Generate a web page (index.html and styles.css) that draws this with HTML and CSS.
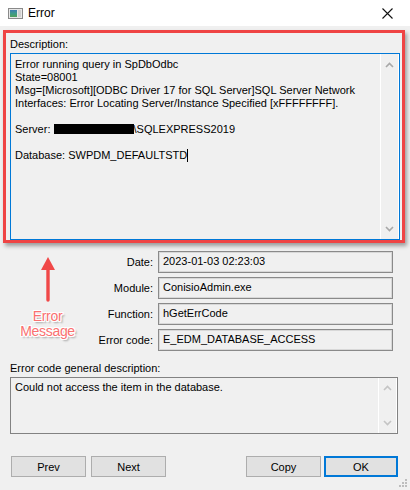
FILE: index.html
```html
<!DOCTYPE html>
<html lang="en">
<head>
    <meta charset="UTF-8">
    <meta name="viewport" content="width=device-width, initial-scale=1.0">
    <title>Error</title>
    <link rel="stylesheet" href="styles.css">
</head>
<body>
    <div class="window">
        <div class="titlebar">
            <svg class="app-icon" width="15" height="11" viewBox="0 0 15 11">
                <defs>
                    <linearGradient id="pane" x1="0" y1="0" x2="0" y2="1">
                        <stop offset="0" stop-color="#3d7bb0"/>
                        <stop offset="0.5" stop-color="#3e9a8a"/>
                        <stop offset="1" stop-color="#4fa05a"/>
                    </linearGradient>
                </defs>
                <rect x="0.5" y="0.5" width="14" height="10" fill="#e8e8e8" stroke="#8a8a8a"/>
                <rect x="2" y="2" width="7" height="7" fill="url(#pane)"/>
                <rect x="10" y="2" width="3" height="7" fill="#d0d0d0"/>
            </svg>
            <span class="title">Error</span>
            <svg class="close" width="11" height="11" viewBox="0 0 11 11">
                <path d="M0.5 0.5 L10.5 10.5 M10.5 0.5 L0.5 10.5" stroke="#111" stroke-width="1.1" fill="none"/>
            </svg>
        </div>

        <div class="content">
            <div class="highlight">
                <div class="label">Description:</div>
                <div class="textbox description">
                    <div class="text">
                        <div>Error running query in SpDbOdbc</div>
                        <div>State=08001</div>
                        <div>Msg=[Microsoft][ODBC Driver 17 for SQL Server]SQL Server Network</div>
                        <div>Interfaces: Error Locating Server/Instance Specified [xFFFFFFFF].</div>
                        <div>&nbsp;</div>
                        <div>Server: <span class="redacted"></span>\SQLEXPRESS2019</div>
                        <div>&nbsp;</div>
                        <div>Database: SWPDM_DEFAULTSTD<span class="caret"></span></div>
                    </div>
                    <div class="scrollbar">
                        <svg width="9" height="6" viewBox="0 0 9 6"><path d="M1 5 L4.5 1.5 L8 5" stroke="#a8a8a8" stroke-width="1.6" fill="none"/></svg>
                        <svg width="9" height="6" viewBox="0 0 9 6"><path d="M1 1 L4.5 4.5 L8 1" stroke="#a8a8a8" stroke-width="1.6" fill="none"/></svg>
                    </div>
                </div>
            </div>

            <div class="details">
                <div class="callout">
                    <svg width="16" height="46" viewBox="0 0 16 46">
                        <path d="M8 0 L15 13 L1 13 Z" fill="#f04848"/>
                        <path d="M8 11 L8 43" stroke="#f04848" stroke-width="3.4" stroke-linecap="round"/>
                    </svg>
                    <div class="callout-text">Error</div>
                    <div class="callout-text">Message</div>
                </div>
                <div class="field-label">Date:</div>
                <div class="field">2023-01-03 02:23:03</div>
                <div class="field-label">Module:</div>
                <div class="field">ConisioAdmin.exe</div>
                <div class="field-label">Function:</div>
                <div class="field">hGetErrCode</div>
                <div class="field-label">Error code:</div>
                <div class="field">E_EDM_DATABASE_ACCESS</div>
            </div>

            <div class="label general-label">Error code general description:</div>
            <div class="textbox general">
                <div class="text">Could not access the item in the database.</div>
                <div class="scrollbar">
                    <svg width="9" height="6" viewBox="0 0 9 6"><path d="M1 5 L4.5 1.5 L8 5" stroke="#c4c4c4" stroke-width="1.6" fill="none"/></svg>
                    <svg width="9" height="6" viewBox="0 0 9 6"><path d="M1 1 L4.5 4.5 L8 1" stroke="#c4c4c4" stroke-width="1.6" fill="none"/></svg>
                </div>
            </div>

            <div class="buttons">
                <button class="btn">Prev</button>
                <button class="btn">Next</button>
                <span class="spacer"></span>
                <button class="btn">Copy</button>
                <button class="btn default">OK</button>
            </div>
        </div>

        <div class="grip">
            <svg width="10" height="10" viewBox="0 0 10 10">
                <rect x="7" y="1" width="2" height="2" fill="#bdbdbd"/>
                <rect x="4" y="4" width="2" height="2" fill="#bdbdbd"/>
                <rect x="7" y="4" width="2" height="2" fill="#bdbdbd"/>
                <rect x="1" y="7" width="2" height="2" fill="#bdbdbd"/>
                <rect x="4" y="7" width="2" height="2" fill="#bdbdbd"/>
                <rect x="7" y="7" width="2" height="2" fill="#bdbdbd"/>
            </svg>
        </div>
    </div>
</body>
</html>
```

FILE: styles.css
```css
body {
    margin: 0;
    padding: 0;
    background: #f0f0f0;
    font-family: "Liberation Sans", Arial, sans-serif;
    font-size: 11px;
    color: #000;
}
.window {
    width: 410px;
    height: 490px;
    position: relative;
    background: #f0f0f0;
    overflow: hidden;
}
.titlebar {
    height: 26px;
    background: #fff;
    display: flex;
    align-items: center;
}
.app-icon {
    margin-left: 8px;
    margin-top: 1px;
}
.title {
    font-size: 12px;
    margin-left: 5px;
    flex: 1;
}
.close {
    margin-right: 17px;
}
.content {
    padding: 0 10px;
}
.label {
    line-height: 13px;
    height: 13px;
}
.highlight {
    margin: 4px -5px 0 -7px;
    border: 3px solid #ef4444;
    box-shadow: 2px 3px 4px rgba(0, 0, 0, 0.35);
    padding: 5px 2px 0 4px;
}
.highlight .label {
    margin-bottom: 2px;
}
.textbox {
    display: flex;
    box-sizing: border-box;
}
.textbox .text {
    flex: 1;
    line-height: 13px;
    white-space: nowrap;
}
.description {
    height: 187px;
    border: 1px solid #0078d7;
}
.description .text {
    padding: 4px 0 0 4px;
}
.scrollbar {
    width: 17px;
    border-left: 1px solid #fff;
    border-right: 1px solid #fff;
    display: flex;
    flex-direction: column;
    align-items: center;
    justify-content: space-between;
}
.description .scrollbar {
    padding: 8px 0 7px;
}
.redacted {
    display: inline-block;
    width: 80px;
    height: 10px;
    background: #000;
    vertical-align: -1px;
}
.caret {
    display: inline-block;
    width: 0;
    height: 13px;
    border-left: 1px solid #000;
    vertical-align: -3px;
}
.details {
    display: grid;
    grid-template-columns: 75px 68px 240px;
    grid-template-rows: repeat(4, 22px);
    column-gap: 0;
    row-gap: 4px;
    margin-top: 8px;
}
.details .field {
    margin-left: 5px;
}
.callout {
    grid-column: 1;
    grid-row: 1 / span 4;
    display: flex;
    flex-direction: column;
    align-items: center;
    padding-top: 6px;
}
.callout svg {
    margin-bottom: 6px;
}
.callout-text {
    font-family: "Liberation Sans Narrow", "Liberation Sans", sans-serif;
    font-stretch: condensed;
    font-size: 14px;
    line-height: 15px;
    height: 15px;
    letter-spacing: -0.3px;
    text-align: center;
    color: #fa7070;
    text-shadow: -1px 0 #fff, 1px 0 #fff, 0 -1px #fff, 0 1px #fff,
        1px 1px #fff, -1px -1px #fff, 1px -1px #fff, -1px 1px #fff,
        2px 2px 2px rgba(0, 0, 0, 0.4);
}
.field-label {
    grid-column: 2;
    text-align: right;
    align-self: center;
    line-height: 13px;
}
.field {
    grid-column: 3;
    box-sizing: border-box;
    border: 1px solid #8a8a8a;
    box-shadow: inset 0 0 0 1px #d8d8d8;
    padding: 3px 0 0 4px;
    line-height: 13px;
    white-space: nowrap;
}
.general-label {
    margin-top: 11px;
}
.general {
    margin-top: 2px;
    width: 388px;
    height: 57px;
    border: 1px solid #828282;
}
.general .text {
    padding: 3px 0 0 4px;
}
.general .scrollbar {
    padding: 7px 0 7px;
}
.buttons {
    display: flex;
    margin-top: 22px;
    padding-left: 1px;
}
.btn {
    font-family: "Liberation Sans", Arial, sans-serif;
    font-size: 11px;
    height: 21px;
    width: 75px;
    margin: 0 5px 0 0;
    padding: 0;
    background: #e1e1e1;
    border: 1px solid #adadad;
    color: #000;
}
.spacer {
    flex: 1;
}
.btn.default {
    width: 74px;
    margin: 0 2px 0 -2px;
    border: 2px solid #0078d7;
}
.grip {
    position: absolute;
    right: 2px;
    bottom: 2px;
    width: 10px;
    height: 10px;
}
```
